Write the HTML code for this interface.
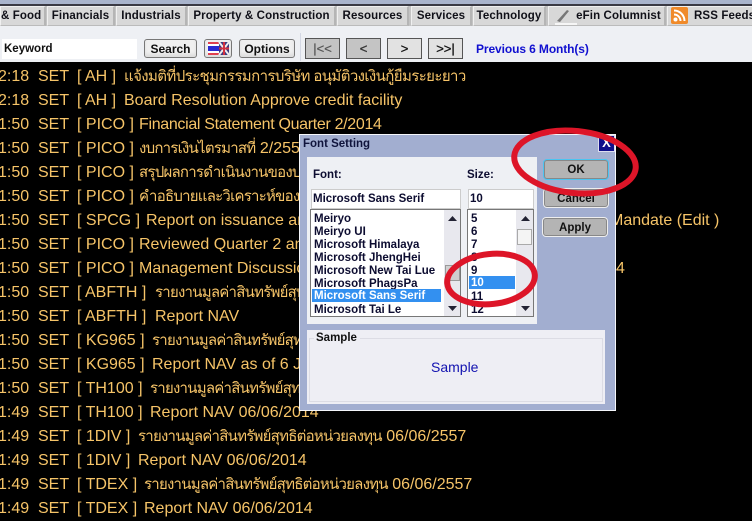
<!DOCTYPE html>
<html><head><meta charset="utf-8">
<style>
html,body{margin:0;padding:0;background:#000}
#p{position:relative;width:752px;height:521px;overflow:hidden;background:#000;font-family:"Liberation Sans",sans-serif}
#p div{position:absolute;box-sizing:border-box}
.tab{top:6px;height:20px;background:#d8d8d8;border:1px solid #f0f0f0;border-bottom-color:#bbb;border-right:2px solid #b5b5b5;font:bold 11.5px/18px "Liberation Sans",sans-serif;letter-spacing:.12px;color:#101018;text-align:center;white-space:nowrap}
.btn{background:#f0f0f0;border:1px solid #777;border-radius:3px;font:bold 12px/18px "Liberation Sans",sans-serif;color:#111;text-align:center;box-shadow:inset 0 -3px 3px #ddd}
.nav{top:38px;height:21px;width:35px;border:1px solid #555;background:#e2e2e2;font:13px/19px "Liberation Sans",sans-serif;-webkit-text-stroke:.3px #111;color:#111;text-align:center}
.r{left:0;height:24px;margin-top:2px;color:#f6c468;font:16px/24px "Liberation Sans","Noto Sans CJK SC",sans-serif;white-space:nowrap;width:752px}
.r b{position:absolute;font-weight:normal;top:0}
.r b.n{left:-2px}
.r i{font-style:normal;font-size:15px;letter-spacing:-.76px}
.dl{font:bold 11.5px/13px "Liberation Sans",sans-serif;color:#0c0c30;white-space:nowrap;margin-top:1px}
.dbtn{background:#b4b4b4;border:1px solid #888;border-radius:3px;box-shadow:0 0 0 1px #eee;font:bold 11.5px/19px "Liberation Sans",sans-serif;color:#111;text-align:center}
</style></head><body><div id="p">

<div style="left:0;top:0;width:752px;height:4px;background:#a9b4cc"></div>
<div style="left:0;top:4px;width:752px;height:2px;background:#3a3a44"></div>
<div style="left:0;top:6px;width:752px;height:20px;background:#c4c4c4"></div>
<div class="tab" style="left:0;width:46px;text-align:right;padding-right:3px;">&amp; Food</div>
<div class="tab" style="left:47px;width:68px">Financials</div>
<div class="tab" style="left:116px;width:71px">Industrials</div>
<div class="tab" style="left:188px;width:148px">Property &amp; Construction</div>
<div class="tab" style="left:337px;width:72px">Resources</div>
<div class="tab" style="left:411px;width:61px">Services</div>
<div class="tab" style="left:473px;width:73px">Technology</div>
<div class="tab" style="left:548px;width:118px;padding-left:24px">eFin Columnist</div>
<svg style="position:absolute;left:553px;top:8px" width="24" height="17" viewBox="0 0 24 17"><path d="M4 13 L14 2 L16 3 L7 14 Z" fill="#777"/><path d="M2 16 H24" stroke="#fff" stroke-width="1.5"/></svg>
<div class="tab" style="left:667px;width:85px;text-align:left;padding-left:26px;border-right:0">RSS Feeds</div>
<svg style="position:absolute;left:671px;top:7px" width="17" height="17" viewBox="0 0 17 17"><rect width="17" height="17" rx="2" fill="#f08a2a"/><circle cx="4.500" cy="12.500" r="2" fill="#fff"/><path d="M3 7.500a6.500 6.500 0 0 1 6.500 6.500M3 3.500a10.500 10.500 0 0 1 10.500 10.500" fill="none" stroke="#fff" stroke-width="2"/></svg>

<div style="left:0;top:26px;width:752px;height:36px;background:#eef0f4"></div>
<div style="left:300px;top:33px;width:1px;height:28px;background:#d4d8e4"></div>
<div style="left:2px;top:39px;width:135px;height:20px;background:#fff;font:bold 11.5px/20px 'Liberation Sans',sans-serif;color:#111;padding-left:2px">Keyword</div>
<div class="btn" style="left:144px;top:39px;width:53px;height:19px">Search</div>
<div class="btn" style="left:204px;top:39px;width:28px;height:19px"></div>
<svg style="position:absolute;left:208px;top:42px" width="21" height="13" viewBox="0 0 21 13"><rect width="11" height="13" fill="#e04050"/><rect y="2" width="11" height="2" fill="#fff"/><rect y="4" width="11" height="5" fill="#2a2ad0"/><rect y="9" width="11" height="2" fill="#fff"/><rect x="11" width="10" height="13" fill="#3a3a80"/><path d="M11 0L21 13M21 0L11 13" stroke="#eee" stroke-width="2"/><path d="M16 0V13M11 6.500H21" stroke="#d03040" stroke-width="2"/></svg>
<div class="btn" style="left:239px;top:39px;width:56px;height:19px">Options</div>
<div class="nav" style="left:305px;background:#c4c4c4;color:#555;-webkit-text-stroke:.2px #555">|&lt;&lt;</div>
<div class="nav" style="left:346px;background:#c4c4c4;color:#444">&lt;</div>
<div class="nav" style="left:387px">&gt;</div>
<div class="nav" style="left:428px">&gt;&gt;|</div>
<div style="left:476px;top:41px;font:bold 12px/16px 'Liberation Sans',sans-serif;letter-spacing:-.1px;color:#1010d0;white-space:nowrap">Previous 6 Month(s)</div>

<div class="r" style="top:63px"><b class="n">2:18</b><b style="left:38px">SET</b><b style="left:77px">[ AH ]</b><b style="left:124px"><i style="letter-spacing:-.6px">แจ้งมติที่ประชุมกรรมการบริษัท อนุมัติวงเงินกู้ยืมระยะยาว</i></b></div>
<div class="r" style="top:87px"><b class="n">2:18</b><b style="left:38px">SET</b><b style="left:77px">[ AH ]</b><b style="left:124px">Board Resolution Approve credit facility</b></div>
<div class="r" style="top:111px"><b class="n">1:50</b><b style="left:38px">SET</b><b style="left:77px">[ PICO ]</b><b style="left:139px;letter-spacing:-.32px">Financial Statement Quarter 2/2014</b></div>
<div class="r" style="top:135px"><b class="n">1:50</b><b style="left:38px">SET</b><b style="left:77px">[ PICO ]</b><b style="left:139px"><i>งบการเงินไตรมาสที่</i> 2/2557</b></div>
<div class="r" style="top:159px"><b class="n">1:50</b><b style="left:38px">SET</b><b style="left:77px">[ PICO ]</b><b style="left:139px"><i>สรุปผลการดำเนินงานของบริษัท</i></b></div>
<div class="r" style="top:183px"><b class="n">1:50</b><b style="left:38px">SET</b><b style="left:77px">[ PICO ]</b><b style="left:139px"><i>คำอธิบายและวิเคราะห์ของฝ่ายจัดการ</i></b></div>
<div class="r" style="top:207px"><b class="n">1:50</b><b style="left:38px">SET</b><b style="left:77px">[ SPCG ]</b><b style="left:146px">Report on issuance and offering</b><b style="left:610px">Mandate (Edit )</b></div>
<div class="r" style="top:231px"><b class="n">1:50</b><b style="left:38px">SET</b><b style="left:77px">[ PICO ]</b><b style="left:139px">Reviewed Quarter 2 and</b></div>
<div class="r" style="top:255px"><b class="n">1:50</b><b style="left:38px">SET</b><b style="left:77px">[ PICO ]</b><b style="left:139px">Management Discussion</b><b style="left:616px">4</b></div>
<div class="r" style="top:279px"><b class="n">1:50</b><b style="left:38px">SET</b><b style="left:77px">[ ABFTH ]</b><b style="left:155px"><i>รายงานมูลค่าสินทรัพย์สุทธิ</i></b></div>
<div class="r" style="top:303px"><b class="n">1:50</b><b style="left:38px">SET</b><b style="left:77px">[ ABFTH ]</b><b style="left:155px">Report NAV</b></div>
<div class="r" style="top:327px"><b class="n">1:50</b><b style="left:38px">SET</b><b style="left:77px">[ KG965 ]</b><b style="left:152px"><i>รายงานมูลค่าสินทรัพย์สุทธิ</i></b></div>
<div class="r" style="top:351px"><b class="n">1:50</b><b style="left:38px">SET</b><b style="left:77px">[ KG965 ]</b><b style="left:152px">Report NAV as of 6 June</b></div>
<div class="r" style="top:375px"><b class="n">1:50</b><b style="left:38px">SET</b><b style="left:77px">[ TH100 ]</b><b style="left:150px"><i>รายงานมูลค่าสินทรัพย์สุทธิ</i></b></div>
<div class="r" style="top:399px"><b class="n">1:49</b><b style="left:38px">SET</b><b style="left:77px">[ TH100 ]</b><b style="left:150px">Report NAV 06/06/2014</b></div>
<div class="r" style="top:423px"><b class="n">1:49</b><b style="left:38px">SET</b><b style="left:77px">[ 1DIV ]</b><b style="left:138px"><i>รายงานมูลค่าสินทรัพย์สุทธิต่อหน่วยลงทุน</i> 06/06/2557</b></div>
<div class="r" style="top:447px"><b class="n">1:49</b><b style="left:38px">SET</b><b style="left:77px">[ 1DIV ]</b><b style="left:138px">Report NAV 06/06/2014</b></div>
<div class="r" style="top:471px"><b class="n">1:49</b><b style="left:38px">SET</b><b style="left:77px">[ TDEX ]</b><b style="left:144px"><i>รายงานมูลค่าสินทรัพย์สุทธิต่อหน่วยลงทุน</i> 06/06/2557</b></div>
<div class="r" style="top:495px"><b class="n">1:49</b><b style="left:38px">SET</b><b style="left:77px">[ TDEX ]</b><b style="left:144px">Report NAV 06/06/2014</b></div>

<!-- dialog -->
<div style="left:299px;top:134px;width:317px;height:277px;background:#a2aed0;border:1px solid #f4f6fa"></div>
<div class="dl" style="left:303px;top:137px;color:#10143c">Font Setting</div>
<div style="left:598px;top:135px;width:17px;height:17px;background:#10108a;border:1px solid #dde;color:#fff;font:bold 13px/14px 'Liberation Sans',sans-serif;text-align:center">X</div>

<div style="left:307px;top:157px;width:230px;height:167px;background:#eef0f4"></div>
<div class="dl" style="left:313px;top:168px">Font:</div>
<div class="dl" style="left:467px;top:168px">Size:</div>
<div style="left:311px;top:189px;width:150px;height:20px;background:#fff;border:1px solid #ccc"></div>
<div class="dl" style="left:313px;top:192px">Microsoft Sans Serif</div>
<div style="left:468px;top:189px;width:66px;height:20px;background:#fff;border:1px solid #ccc"></div>
<div class="dl" style="left:470px;top:192px">10</div>

<div style="left:310px;top:209px;width:151px;height:108px;background:#fff;border:1px solid #777"></div>
<div style="left:444px;top:210px;width:16px;height:106px;background:#e8e8ee"></div>
<div style="left:445px;top:265px;width:15px;height:16px;background:#cfcfcf;border:1px solid #999"></div>
<div class="dl" style="left:314px;top:212px">Meiryo</div>
<div class="dl" style="left:314px;top:225px">Meiryo UI</div>
<div class="dl" style="left:314px;top:238px">Microsoft Himalaya</div>
<div class="dl" style="left:314px;top:251px">Microsoft JhengHei</div>
<div class="dl" style="left:314px;top:264px">Microsoft New Tai Lue</div>
<div class="dl" style="left:314px;top:277px">Microsoft PhagsPa</div>
<div style="left:312px;top:289px;width:129px;height:13px;background:#3390f0"></div>
<div class="dl" style="left:314px;top:289px;color:#fff">Microsoft Sans Serif</div>
<div class="dl" style="left:314px;top:303px">Microsoft Tai Le</div>
<svg style="position:absolute;left:448px;top:216px" width="9" height="5"><path d="M0 5L4.500 0L9 5Z" fill="#223"/></svg>
<svg style="position:absolute;left:448px;top:306px" width="9" height="5"><path d="M0 0L4.500 5L9 0Z" fill="#223"/></svg>

<div style="left:467px;top:209px;width:67px;height:108px;background:#fff;border:1px solid #777"></div>
<div style="left:516px;top:210px;width:17px;height:106px;background:#e8e8ee"></div>
<div style="left:517px;top:229px;width:15px;height:16px;background:#f4f4f4;border:1px solid #aaa"></div>
<div class="dl" style="left:471px;top:212px">5</div>
<div class="dl" style="left:471px;top:225px">6</div>
<div class="dl" style="left:471px;top:238px">7</div>
<div class="dl" style="left:471px;top:251px">8</div>
<div class="dl" style="left:471px;top:264px">9</div>
<div style="left:469px;top:276px;width:46px;height:13px;background:#3390f0"></div>
<div class="dl" style="left:471px;top:276px;color:#fff">10</div>
<div class="dl" style="left:471px;top:290px">11</div>
<div class="dl" style="left:471px;top:303px">12</div>
<svg style="position:absolute;left:521px;top:216px" width="9" height="5"><path d="M0 5L4.500 0L9 5Z" fill="#223"/></svg>
<svg style="position:absolute;left:521px;top:306px" width="9" height="5"><path d="M0 0L4.500 5L9 0Z" fill="#223"/></svg>

<div class="dbtn" style="left:544px;top:160px;width:64px;height:19px;box-shadow:0 0 0 1px #4cc4f0">OK</div>
<div class="dbtn" style="left:544px;top:189px;width:64px;height:18px">Cancel</div>
<div class="dbtn" style="left:543px;top:218px;width:64px;height:18px">Apply</div>

<div style="left:307px;top:330px;width:298px;height:74px;background:#eeeef4"></div>
<div style="left:309px;top:338px;width:294px;height:64px;border:1px solid #dcdce4"></div>
<div style="left:314px;top:330px;width:46px;height:14px;background:#eeeef4"></div>
<div class="dl" style="left:316px;top:331px;color:#111">Sample</div>
<div style="left:431px;top:359px;font:14px/16px 'Liberation Sans',sans-serif;color:#1212b0">Sample</div>

<svg style="position:absolute;left:0;top:0" width="752" height="521" viewBox="0 0 752 521"><ellipse cx="575" cy="162" rx="61" ry="31" fill="none" stroke="#dd1528" stroke-width="6" transform="rotate(6 575 162)"/><ellipse cx="491" cy="279" rx="44" ry="25" fill="none" stroke="#dd1528" stroke-width="6" transform="rotate(-6 491 279)"/></svg>
</div></body></html>
